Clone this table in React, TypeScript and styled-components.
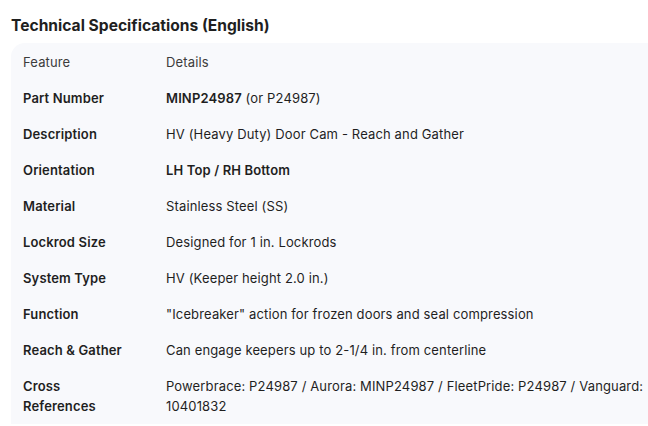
import React from 'react';
import styled, { createGlobalStyle } from 'styled-components';

const GlobalStyle = createGlobalStyle`
  html, body {
    margin: 0;
    padding: 0;
    background: #ffffff;
  }
  body {
    font-family: Inter, 'Noto Sans', sans-serif;
    color: #1f1f1f;
    overflow: hidden;
  }
`;

const Page = styled.div`
  width: 648px;
  height: 426px;
  padding: 15px 0 0 11px;
  box-sizing: border-box;
`;

const Title = styled.h2`
  margin: 0 0 7px 0;
  font-size: 15.6px;
  line-height: 21px;
  font-weight: 700;
  color: #1f1f1f;
`;

const Panel = styled.div`
  background: #f8f9fc;
  border-radius: 14px 0 0 0;
  padding: 1px 0 0 0;
`;

const Row = styled.div`
  display: grid;
  grid-template-columns: 143px 1fr;
`;

const Cell = styled.div<{ $head?: boolean; $label?: boolean }>`
  padding: 8px 4px 8px 12px;
  font-size: 13px;
  line-height: 20px;
  letter-spacing: 0.14px;
  font-weight: ${(p) => (p.$label ? 600 : 400)};
  color: ${(p) => (p.$head ? '#3c3c3c' : '#1f1f1f')};
`;

const LabelCell = styled(Cell)`
  padding-right: 30px;
`;

const Strong = styled.b`
  font-weight: 600;
`;

const specs: { label: string; value: React.ReactNode }[] = [
  { label: 'Part Number', value: <><Strong>MINP24987</Strong> (or P24987)</> },
  { label: 'Description', value: 'HV (Heavy Duty) Door Cam - Reach and Gather' },
  { label: 'Orientation', value: <Strong>LH Top / RH Bottom</Strong> },
  { label: 'Material', value: 'Stainless Steel (SS)' },
  { label: 'Lockrod Size', value: 'Designed for 1 in. Lockrods' },
  { label: 'System Type', value: 'HV (Keeper height 2.0 in.)' },
  { label: 'Function', value: '"Icebreaker" action for frozen doors and seal compression' },
  { label: 'Reach & Gather', value: 'Can engage keepers up to 2-1/4 in. from centerline' },
  {
    label: 'Cross References',
    value: 'Powerbrace: P24987 / Aurora: MINP24987 / FleetPride: P24987 / Vanguard: 10401832',
  },
];

const App = () => {
  return (
    <Page>
      <GlobalStyle />
      <Title>Technical Specifications (English)</Title>
      <Panel>
        <Row>
          <LabelCell $head>Feature</LabelCell>
          <Cell $head>Details</Cell>
        </Row>
        {specs.map((s) => (
          <Row key={s.label}>
            <LabelCell $label>{s.label}</LabelCell>
            <Cell>{s.value}</Cell>
          </Row>
        ))}
      </Panel>
    </Page>
  );
};

export default App;
